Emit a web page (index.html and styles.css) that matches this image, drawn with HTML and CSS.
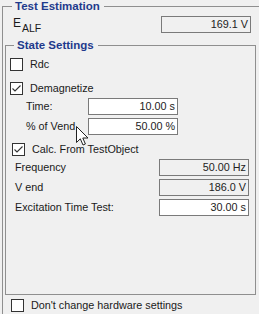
FILE: index.html
```html
<!DOCTYPE html>
<html lang="en">
<head>
    <meta charset="UTF-8">
    <title>Test Estimation</title>
    <link rel="stylesheet" href="styles.css">
</head>
<body>
    <fieldset class="group group-outer">
        <legend>Test Estimation</legend>
        <div class="row row-ealf">
            <span class="label label-e">E<sub>ALF</sub></span>
            <span class="field field-ro">169.1 V</span>
        </div>

        <fieldset class="group group-inner">
            <legend>State Settings</legend>
            <div class="inner-body">
                <label class="check check-rdc"><span class="box"></span>Rdc</label>
                <label class="check check-demag"><span class="box"><svg viewBox="0 0 11 11"><path d="M1.5 5.5 L4 8 L9.5 2.5"/></svg></span>Demagnetize</label>

                <div class="row row-sub row-time">
                    <span class="label label-sub">Time:</span>
                    <span class="field">10.00 s</span>
                </div>
                <div class="row row-sub row-vend">
                    <span class="label label-sub">% of Vend</span>
                    <span class="field">50.00 %</span>
                </div>

                <label class="check check-calc"><span class="box"><svg viewBox="0 0 11 11"><path d="M1.5 5.5 L4 8 L9.5 2.5"/></svg></span>Calc. From TestObject</label>

                <div class="row row-obj row-freq">
                    <span class="label label-obj">Frequency</span>
                    <span class="field field-ro">50.00 Hz</span>
                </div>
                <div class="row row-obj row-v">
                    <span class="label label-obj">V end</span>
                    <span class="field field-ro">186.0 V</span>
                </div>
                <div class="row row-obj row-exc">
                    <span class="label label-obj">Excitation Time Test:</span>
                    <span class="field">30.00 s</span>
                </div>
            </div>
        </fieldset>

        <label class="check check-bottom"><span class="box"></span>Don't change hardware settings</label>
    </fieldset>

    <!-- mouse pointer from the capture -->
    <svg class="cursor" width="14" height="21" viewBox="0 0 14 21">
        <path d="M0.5 0.5 V16.5 L4.3 12.8 L7 19 L9.4 18 L6.8 12 H12 Z"/>
    </svg>
</body>
</html>
```

FILE: styles.css
```css
/* WinForms style panel */
body {
    margin: 0;
    width: 259px;
    height: 314px;
    overflow: hidden;
    position: relative;
    background-color: #f0f0f0;
    font-family: "Liberation Sans", Arial, sans-serif;
    font-size: 10.8px;
    color: #1a1a1a;
}
.group {
    margin: 0;
    padding: 0;
    min-width: 0;
    box-sizing: border-box;
    border: 1px solid #8f8f8f;
}
.group legend {
    font-weight: bold;
    font-size: 11.5px;
    line-height: 13px;
    color: #1f3a8c;
    padding: 0 4px 0 3px;
}
/* right edge of the outer box is cut off in the capture */
.group-outer {
    margin-left: 2px;
    width: 257px;
    border-right-width: 0;
}
.group-outer > legend {
    margin-left: 9px;
}
.group-inner {
    margin: 6px 0 0 2px;
    width: 251px;
}
.group-inner > legend {
    margin-left: 8px;
}
.inner-body {
    height: 239px;
}
.row {
    display: flex;
    align-items: center;
}
.row-ealf {
    height: 17px;
    margin-top: 3px;
    padding-left: 10px;
}
.label-e {
    width: 148px;
    font-size: 12px;
}
.label-e sub {
    font-size: 10.5px;
    vertical-align: -5px;
    margin-left: 1px;
}
.field {
    box-sizing: border-box;
    width: 90px;
    height: 17px;
    line-height: 15px;
    border: 1px solid #7a7a7a;
    background-color: #fff;
    text-align: right;
    padding-right: 2px;
    color: #222;
}
.field-ro {
    background-color: transparent;
}
.check {
    display: flex;
    align-items: center;
    height: 18px;
}
.box {
    box-sizing: border-box;
    width: 13px;
    height: 13px;
    margin-right: 7px;
    border: 1px solid #333;
    background-color: #fff;
}
.box svg {
    display: block;
    width: 11px;
    height: 11px;
}
.box path {
    fill: none;
    stroke: #333;
    stroke-width: 1.1;
}
.check-rdc {
    margin-top: 3px;
    padding-left: 4px;
}
.check-demag {
    margin-top: 6px;
    padding-left: 4px;
}
.row-sub {
    height: 18px;
    padding-left: 20px;
}
.label-sub {
    width: 62px;
}
.row-vend {
    margin-top: 2px;
}
.check-calc {
    margin-top: 5px;
    padding-left: 6px;
}
.row-obj {
    height: 18px;
    padding-left: 9px;
}
.label-obj {
    width: 144px;
}
.row-v,
.row-exc {
    margin-top: 2px;
}
.check-bottom {
    margin: 1px 0 1px;
    padding-left: 8px;
}
.cursor {
    position: absolute;
    left: 76px;
    top: 126px;
}
.cursor path {
    fill: #fff;
    stroke: #222;
    stroke-width: 1;
}
```
